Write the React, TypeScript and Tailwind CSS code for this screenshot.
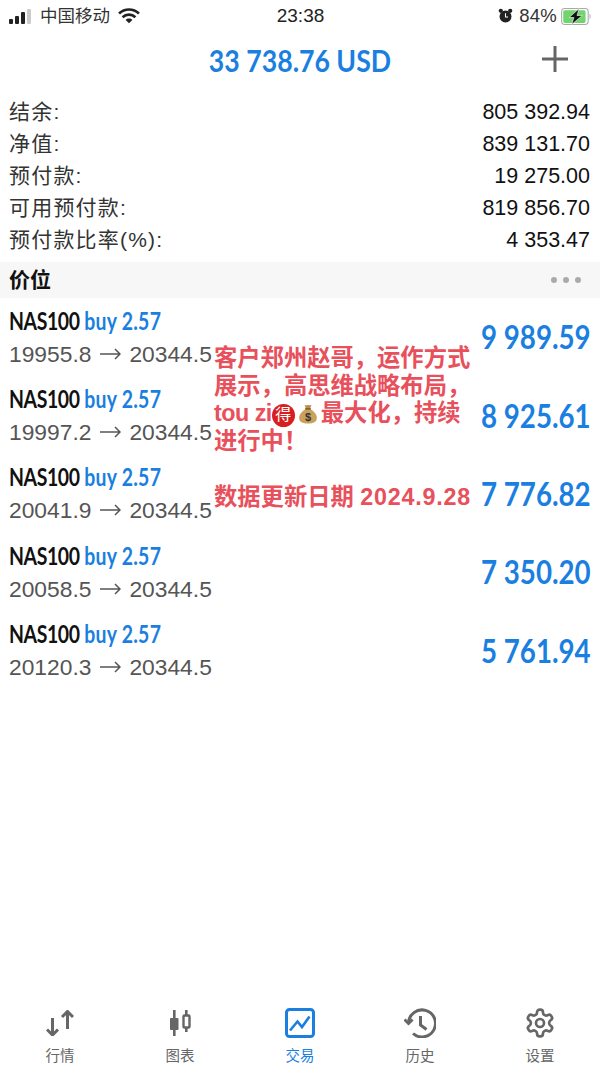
import React from 'react';

const sans = 'font-["Liberation_Sans","Noto_Sans_CJK_SC",sans-serif]';

const summary = [
  ['结余:', '805 392.94'],
  ['净值:', '839 131.70'],
  ['预付款:', '19 275.00'],
  ['可用预付款:', '819 856.70'],
  ['预付款比率(%):', '4 353.47'],
];

const positions = [
  ['19955.8', '9 989.59'],
  ['19997.2', '8 925.61'],
  ['20041.9', '7 776.82'],
  ['20058.5', '7 350.20'],
  ['20120.3', '5 761.94'],
];

const StatusBar = () => (
  <div className="flex h-[32px] items-center justify-between pl-[9px] pr-[8px] text-[#222]">
    <div className="flex w-[220px] items-center">
      <div className="flex items-end gap-[2px]">
        <span className="h-[5px] w-[4px] rounded-[1px] bg-[#222]" />
        <span className="h-[8px] w-[4px] rounded-[1px] bg-[#222]" />
        <span className="h-[12px] w-[4px] rounded-[1px] bg-[#222]" />
        <span className="h-[15px] w-[4px] rounded-[1px] bg-[#ccc]" />
      </div>
      <span className="ml-[9px] text-[17.500px] text-[#333]">中国移动</span>
      <svg className="ml-[8px]" width="22" height="16" viewBox="0 0 21 15" fill="none" stroke="#222" strokeWidth="2.6">
        <path d="M1 5.200C6.500 0 14.500 0 20 5.200" />
        <path d="M4.400 8.600C7.800 5.400 13.200 5.400 16.600 8.600" />
        <path d="M10.500 14.500L7.300 11.200C9 9.600 12 9.600 13.700 11.200Z" fill="#222" stroke="none" />
      </svg>
    </div>
    <span className="text-[19px]">23:38</span>
    <div className="flex w-[220px] items-center justify-end">
      <svg width="15" height="16" viewBox="0 0 14 15">
        <circle cx="7" cy="8" r="5.600" fill="#222" />
        <circle cx="2.600" cy="2.600" r="2" fill="#222" />
        <circle cx="11.400" cy="2.600" r="2" fill="#222" />
        <path d="M7 5v3.400h2.400" stroke="#fff" strokeWidth="1" fill="none" />
      </svg>
      <span className="ml-[6px] text-[18.500px] tracking-[0.200px] text-[#333]">84%</span>
      <svg className="ml-[4px]" width="31" height="17" viewBox="0 0 29 16">
        <rect x="0.500" y="0.500" width="25" height="15" rx="3" fill="none" stroke="#aaa" />
        <rect x="2" y="2" width="21" height="12" rx="1.500" fill="#6fd56c" />
        <path d="M26.800 5.500c1.200.4 1.200 4.600 0 5z" fill="#aaa" />
        <path d="M17 0.500L7.500 9H12L10 15.500 20 7h-5z" fill="#111" stroke="#fff" strokeWidth="0.600" />
      </svg>
    </div>
  </div>
);

const BottomTab = ({ label, active, children }: { label: string; active?: boolean; children: React.ReactNode }) => (
  <div className={`flex w-[120px] flex-col items-center ${active ? 'text-[#1a7fe0]' : 'text-[#666]'}`}>
    <div className="flex h-[32px] w-[32px] items-center justify-center">{children}</div>
    <span className="mt-[7px] text-[14.500px] leading-[20px]">{label}</span>
  </div>
);

const MoneyBag = () => (
  <svg className="mx-[3px] inline-block align-[-3px]" width="20" height="21" viewBox="0 0 18 19">
    <path d="M6 1.500c1.200 1 2 .2 3 .2s2 .8 3.200-.2L11 5H7z" fill="#b98f4a" />
    <path d="M7 5.500C3.500 7.500 1 10.500 1 13.500 1 17 4 18.500 9 18.500s8-1.500 8-5c0-3-2.500-6-6-8z" fill="#c9a15c" />
    <rect x="6.500" y="4.600" width="5" height="1.400" fill="#7a5a2a" />
    <text x="9" y="16" fontSize="10" textAnchor="middle" fill="#333" fontFamily="Liberation Sans">$</text>
  </svg>
);

export default function App() {
  return (
    <div className={`relative flex h-[1067px] w-[600px] flex-col overflow-hidden bg-white ${sans}`}>
      <StatusBar />

      <div className="relative flex h-[56px] items-center justify-center">
        <span className="origin-center scale-x-[0.86] font-['Lato'] text-[31px] font-bold text-[#1a7fe0]">33 738.76 USD</span>
        <svg className="absolute right-[32px] top-[14px]" width="26" height="26" viewBox="0 0 26 26" stroke="#666" strokeWidth="3">
          <path d="M13 0v26M0 13h26" />
        </svg>
      </div>

      <div className="mt-[8px] flex flex-col pl-[9px] pr-[10px]">
        {summary.map(([label, value]) => (
          <div key={label} className="flex h-[32px] items-center justify-between">
            <span className="text-[21px] tracking-[1.200px] text-[#333]">{label}</span>
            <span className="text-[21.500px] text-[#111]">{value}</span>
          </div>
        ))}
      </div>

      <div className="mt-[6px] flex h-[36px] items-center justify-between bg-[#f7f7f7] pl-[9px] pr-[19px]">
        <span className="text-[21px] font-bold text-[#111]">价位</span>
        <div className="flex gap-[6px]">
          <span className="h-[6px] w-[6px] rounded-full bg-[#aaa]" />
          <span className="h-[6px] w-[6px] rounded-full bg-[#aaa]" />
          <span className="h-[6px] w-[6px] rounded-full bg-[#aaa]" />
        </div>
      </div>

      <div className="flex flex-col">
        {positions.map(([open, profit]) => (
          <div key={open} className="flex h-[78.300px] items-center justify-between pl-[9px] pr-[9px]">
            <div className="flex flex-col">
              <div className="h-[28px] origin-left scale-x-[0.81] whitespace-nowrap font-['Lato'] text-[24px] font-bold leading-[28px]">
                <span className="tracking-[-0.500px] text-[#111]">NAS100</span>{' '}
                <span className="tracking-[0.300px] text-[#1a7fe0]">buy 2.57</span>
              </div>
              <div className="mt-[5px] flex items-center whitespace-nowrap text-[22.800px] leading-[28px] text-[#555]">
                <span>{open}</span>
                <svg className="ml-[9px] mr-[8px]" width="21" height="12" viewBox="0 0 21 12" fill="none" stroke="#555" strokeWidth="1.500">
                  <path d="M0 6h20M15 1l5 5-5 5" />
                </svg>
                <span>20344.5</span>
              </div>
            </div>
            <span className="origin-right scale-x-[0.84] whitespace-nowrap font-['Lato'] text-[33px] font-bold text-[#1a7fe0]">{profit}</span>
          </div>
        ))}
      </div>

      <div className="absolute left-[214px] top-[345px] w-[262px] text-[23.300px] font-bold leading-[27.500px] text-[#e8505b]">
        <div className="whitespace-nowrap">客户郑州赵哥，运作方式</div>
        <div className="whitespace-nowrap">展示，高思维战略布局，</div>
        <div className="h-[27.500px] whitespace-nowrap">
          <span className="tracking-[-0.500px]">tou zi</span>
          <span className="inline-flex h-[23px] w-[23px] items-center justify-center rounded-full bg-[#d81e1e] align-[1px] text-[16px] font-normal leading-none text-white">得</span>
          <MoneyBag />
          <span>最大化，持续</span>
        </div>
        <div>进行中！</div>
        <div className="mt-[29px] whitespace-nowrap">
          数据更新日期 <span className="tracking-[0.800px]">2024.9.28</span>
        </div>
      </div>

      <div className="mt-auto flex h-[60px] items-start justify-center">
        <BottomTab label="行情">
          <svg width="28" height="26" viewBox="0 0 28 26" fill="none" stroke="currentColor" strokeWidth="3">
            <path d="M6.500 8v17M1 19.500L6.500 25l5.500-5.500" />
            <path d="M21.500 19V1.500M16 7l5.500-5.500L27 7" />
          </svg>
        </BottomTab>
        <BottomTab label="图表">
          <svg width="22" height="26" viewBox="0 0 22 26" fill="currentColor">
            <rect x="4" y="0" width="2.600" height="26" />
            <rect x="1" y="8" width="8.500" height="12" rx="1" />
            <rect x="16" y="0" width="2.600" height="22" />
            <rect x="14.500" y="5.500" width="6" height="12" rx="1" fill="#fff" stroke="currentColor" strokeWidth="2.400" />
          </svg>
        </BottomTab>
        <BottomTab label="交易" active>
          <svg width="30" height="30" viewBox="0 0 30 30" fill="none" stroke="currentColor">
            <rect x="1.500" y="1.500" width="27" height="27" rx="3" strokeWidth="3" />
            <path d="M5 22.500L12.500 13.500 17 19l7.500-10.500" strokeWidth="2.600" />
          </svg>
        </BottomTab>
        <BottomTab label="历史">
          <svg width="32" height="30" viewBox="0 0 32 30" fill="none" stroke="currentColor" strokeWidth="3">
            <path d="M4.500 15A13.500 13.500 0 1 1 9 25.500" />
            <path d="M0.500 11.500L4.500 15.500 8.500 11.500" />
            <path d="M16.500 8v9l6 4.500" />
          </svg>
        </BottomTab>
        <BottomTab label="设置">
          <svg width="32" height="32" viewBox="0 0 24 24" fill="none" stroke="currentColor" strokeWidth="2">
            <path d="M12.220 2h-.440a2 2 0 0 0-2 2v.180a2 2 0 0 1-1 1.730l-.430.250a2 2 0 0 1-2 0l-.150-.080a2 2 0 0 0-2.730.730l-.220.380a2 2 0 0 0 .730 2.730l.150.100a2 2 0 0 1 1 1.720v.510a2 2 0 0 1-1 1.740l-.150.090a2 2 0 0 0-.730 2.730l.220.380a2 2 0 0 0 2.730.730l.150-.080a2 2 0 0 1 2 0l.430.250a2 2 0 0 1 1 1.730V20a2 2 0 0 0 2 2h.440a2 2 0 0 0 2-2v-.180a2 2 0 0 1 1-1.730l.430-.250a2 2 0 0 1 2 0l.150.080a2 2 0 0 0 2.730-.730l.220-.390a2 2 0 0 0-.730-2.730l-.150-.080a2 2 0 0 1-1-1.740v-.500a2 2 0 0 1 1-1.740l.150-.090a2 2 0 0 0 .730-2.730l-.220-.380a2 2 0 0 0-2.730-.730l-.150.080a2 2 0 0 1-2 0l-.430-.250a2 2 0 0 1-1-1.730V4a2 2 0 0 0-2-2z" />
            <circle cx="12" cy="12" r="3" />
          </svg>
        </BottomTab>
      </div>
    </div>
  );
}
